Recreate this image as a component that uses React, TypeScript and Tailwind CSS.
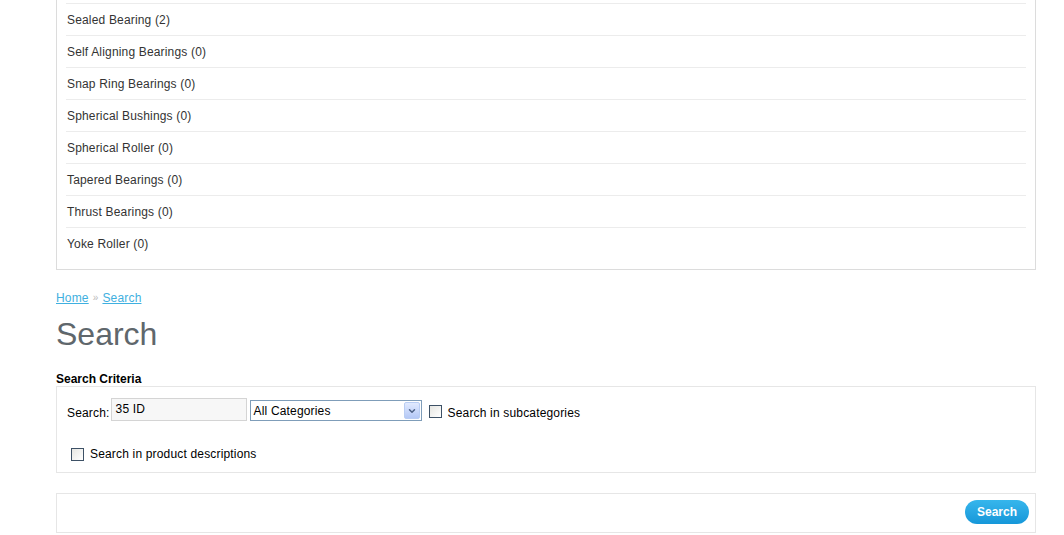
import { ChevronDown } from 'lucide-react'

const categories = [
  'Sealed Bearing (2)',
  'Self Aligning Bearings (0)',
  'Snap Ring Bearings (0)',
  'Spherical Bushings (0)',
  'Spherical Roller (0)',
  'Tapered Bearings (0)',
  'Thrust Bearings (0)',
  'Yoke Roller (0)',
]

function Checkbox() {
  return (
    <span className="inline-block h-[13px] w-[13px] shrink-0 border border-[#3d5166] bg-gradient-to-br from-[#e6e6e2] to-white" />
  )
}

export default function App() {
  return (
    <div className="min-h-[535px] bg-white font-['Liberation_Sans',Arial,sans-serif] text-[12px] leading-[14px] tracking-[0.17px] text-[#333]">
      <div className="ml-[56px] w-[980px]">
        {/* category list (scrolled, top cut off) */}
        <div className="border-x border-b border-[#dcdcdc] px-[9px] pt-[3px] pb-[10px]">
          {categories.map((name) => (
            <div
              key={name}
              className="flex h-[32px] items-center border-t border-[#ececec] pl-px"
            >
              {name}
            </div>
          ))}
        </div>

        <div className="mt-[21px] flex items-center gap-[4px]">
          <a href="#" className="text-[#3fb0e0] underline">
            Home
          </a>
          <span className="text-[10px] text-[#bbb]">»</span>
          <a href="#" className="text-[#3fb0e0] underline">
            Search
          </a>
        </div>

        <h1 className="mt-[13px] text-[32px] leading-[32px] font-normal tracking-normal text-[#5f676c]">
          Search
        </h1>

        <div className="mt-[22px] font-bold tracking-normal text-black">Search Criteria</div>

        <div className="h-[87px] border border-[#e6e6e6] px-[10px] pt-[11px]">
          <div className="flex items-start">
            <span className="mt-[8px] text-black">Search:</span>
            <div className="ml-[1px] flex h-[23px] w-[136px] items-start border border-[#d4d4d4] bg-[#f7f7f7] pt-[3px] pl-[4px] text-black">
              35 ID
            </div>
            <div className="ml-[3px] mt-[2px] flex h-[21px] w-[172px] items-center border border-[#7f9db9] bg-white text-black">
              <span className="flex-1 pl-[3px]">All Categories</span>
              <span className="m-px flex h-[17px] w-[16px] items-center justify-center rounded-[2px] border border-[#b9cdf3] bg-gradient-to-b from-[#e1eafe] to-[#b4c8f6]">
                <ChevronDown className="h-[10px] w-[10px] text-[#4d6185]" strokeWidth={3.5} />
              </span>
            </div>
            <span className="ml-[7px] mt-[7px] flex">
              <Checkbox />
            </span>
            <span className="ml-[6px] mt-[8px] text-black">Search in subcategories</span>
          </div>

          <div className="mt-[26px] ml-[4px] flex items-center gap-[6px]">
            <Checkbox />
            <span className="text-black">Search in product descriptions</span>
          </div>
        </div>

        <div className="mt-[20px] flex h-[40px] justify-end border border-[#e6e6e6] pt-[6px] pr-[6px]">
          <button
            type="button"
            className="h-[24px] w-[64px] rounded-full bg-gradient-to-b from-[#36b6ec] to-[#1597d9] text-[12px] font-bold tracking-normal text-white"
          >
            Search
          </button>
        </div>
      </div>
    </div>
  )
}
